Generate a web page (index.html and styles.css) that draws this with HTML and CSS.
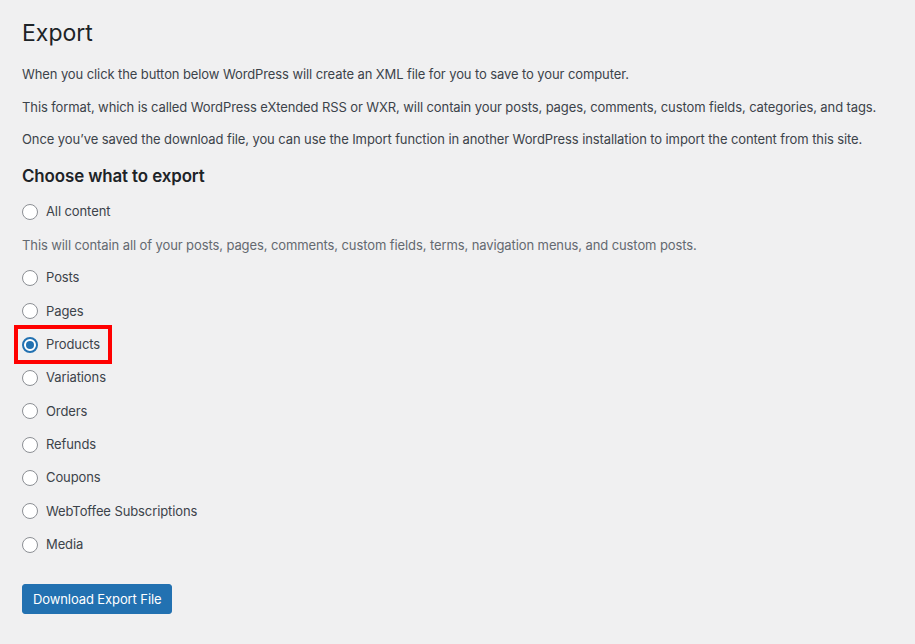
FILE: index.html
```html
<!DOCTYPE html>
<html lang="en">
<head>
<meta charset="utf-8">
<title>Export</title>
<link rel="stylesheet" href="styles.css">
</head>
<body>
<div class="wrap">
  <h1 class="page-title">Export</h1>
  <p class="intro">When you click the button below WordPress will create an XML file for you to save to your computer.</p>
  <p class="intro">This format, which is called WordPress eXtended RSS or WXR, will contain your posts, pages, comments, custom fields, categories, and tags.</p>
  <p class="intro">Once you’ve saved the download file, you can use the Import function in another WordPress installation to import the content from this site.</p>
  <h2 class="section-title">Choose what to export</h2>
  <div class="filters">
    <label class="option"><span class="radio"></span><span>All content</span></label>
    <p class="description">This will contain all of your posts, pages, comments, custom fields, terms, navigation menus, and custom posts.</p>
    <label class="option"><span class="radio"></span><span>Posts</span></label>
    <label class="option"><span class="radio"></span><span>Pages</span></label>
    <label class="option highlighted"><span class="radio checked"></span><span>Products</span></label>
    <label class="option"><span class="radio"></span><span>Variations</span></label>
    <label class="option"><span class="radio"></span><span>Orders</span></label>
    <label class="option"><span class="radio"></span><span>Refunds</span></label>
    <label class="option"><span class="radio"></span><span>Coupons</span></label>
    <label class="option"><span class="radio"></span><span>WebToffee Subscriptions</span></label>
    <label class="option"><span class="radio"></span><span>Media</span></label>
  </div>
  <button class="button-primary" type="button">Download Export File</button>
</div>
</body>
</html>
```
FILE: styles.css
```css
html, body {
  margin: 0;
  padding: 0;
  background: #f0f0f1;
}
body {
  font-family: Inter, "Noto Sans", sans-serif;
  font-size: 13px;
  letter-spacing: -0.1px;
  line-height: 1.5;
  color: #3c434a;
  height: 644px;
  overflow: hidden;
}
.wrap {
  padding: 18px 22px 0 22px;
}
.page-title {
  font-size: 23px;
  font-weight: 400;
  letter-spacing: 0;
  line-height: 30px;
  margin: 0 0 17px 0;
  color: #1d2327;
}
.intro {
  margin: 0 0 13px 0;
  line-height: 19.5px;
}
.section-title {
  font-size: 16.9px;
  font-weight: 600;
  color: #1d2327;
  line-height: 22px;
  margin: 15px 0 15px 0;
}
.filters {
  display: flex;
  flex-direction: column;
  align-items: flex-start;
  gap: 13.33px;
}
.option {
  display: flex;
  align-items: center;
  height: 20px;
  gap: 8px;
}
.description {
  margin: 0;
  height: 20px;
  line-height: 20px;
  color: #646970;
}
.radio {
  box-sizing: border-box;
  width: 16px;
  height: 16px;
  border-radius: 50%;
  border: 1px solid #8c8f94;
  background: #fff;
  display: inline-flex;
  align-items: center;
  justify-content: center;
}
.radio.checked {
  border-color: #2271b1;
  border-width: 2px;
}
.radio.checked::before {
  content: "";
  width: 8px;
  height: 8px;
  border-radius: 50%;
  background: #2271b1;
}
.highlighted {
  border: 4px solid #ff0000;
  padding: 0 8px 0 4px;
  margin-left: -8px;
  height: 31px;
  margin-top: -9.5px;
  margin-bottom: -9.5px;
}
.button-primary {
  margin-top: 29px;
  background: #2271b1;
  border: 1px solid #2271b1;
  color: #fff;
  font-family: inherit;
  font-size: 13px;
  letter-spacing: -0.1px;
  line-height: 28px;
  height: 30px;
  padding: 0 10px;
  border-radius: 3px;
  cursor: pointer;
}
```
